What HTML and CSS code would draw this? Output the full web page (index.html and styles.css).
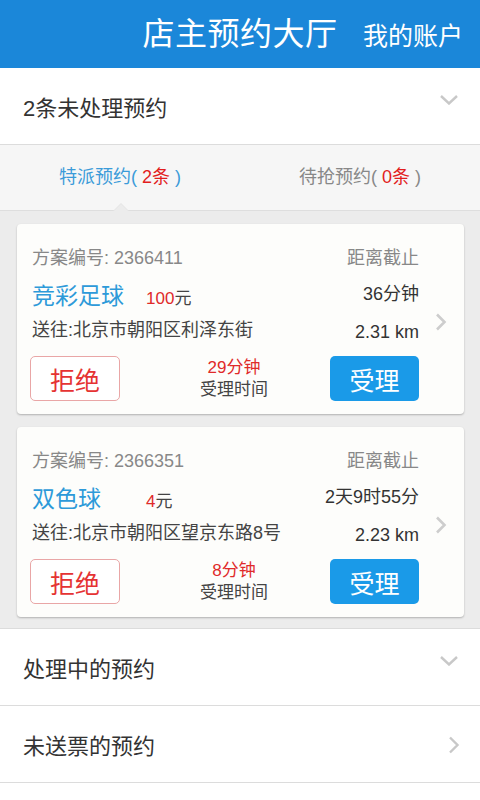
FILE: index.html
```html
<!DOCTYPE html>
<html lang="zh-CN">
<head>
<meta charset="utf-8">
<meta name="viewport" content="width=device-width, initial-scale=1">
<title>店主预约大厅</title>
<link rel="stylesheet" href="styles.css">
</head>
<body>
    <div class="topbar">
        <span></span>
        <h1>店主预约大厅</h1>
        <a class="account" href="#">我的账户</a>
    </div>

    <div class="section open">
        <span>2条未处理预约</span>
        <svg class="chev-down" width="18" height="10" viewBox="0 0 18 10"><path d="M1 1l8 7.5L17 1" fill="none" stroke="#c8c8c8" stroke-width="2.4"/></svg>
    </div>

    <div class="tabs">
        <div class="tab active">特派预约( <em>2条</em> )<i class="pointer"></i></div>
        <div class="tab">待抢预约( <em>0条</em> )</div>
    </div>

    <div class="list">
        <div class="card">
            <div class="card-body">
                <div class="info">
                    <div class="left">
                        <p class="code">方案编号: 2366411</p>
                        <p class="game"><span class="name">竞彩足球</span><span class="price"><b>100</b>元</span></p>
                        <p class="addr">送往:北京市朝阳区利泽东街</p>
                    </div>
                    <div class="right">
                        <p class="label">距离截止</p>
                        <p class="left-time">36分钟</p>
                        <p class="dist">2.31 km</p>
                    </div>
                </div>
                <div class="actions">
                    <button class="btn refuse">拒绝</button>
                    <div class="accept-time"><b>29分钟</b><span>受理时间</span></div>
                    <button class="btn accept">受理</button>
                </div>
            </div>
            <svg class="chev-right" width="12" height="18" viewBox="0 0 12 18"><path d="M2 1.5l7.5 7.5L2 16.5" fill="none" stroke="#cdcdcd" stroke-width="2.6"/></svg>
        </div>

        <div class="card">
            <div class="card-body">
                <div class="info">
                    <div class="left">
                        <p class="code">方案编号: 2366351</p>
                        <p class="game"><span class="name">双色球</span><span class="price"><b>4</b>元</span></p>
                        <p class="addr">送往:北京市朝阳区望京东路8号</p>
                    </div>
                    <div class="right">
                        <p class="label">距离截止</p>
                        <p class="left-time">2天9时55分</p>
                        <p class="dist">2.23 km</p>
                    </div>
                </div>
                <div class="actions">
                    <button class="btn refuse">拒绝</button>
                    <div class="accept-time"><b>8分钟</b><span>受理时间</span></div>
                    <button class="btn accept">受理</button>
                </div>
            </div>
            <svg class="chev-right" width="12" height="18" viewBox="0 0 12 18"><path d="M2 1.5l7.5 7.5L2 16.5" fill="none" stroke="#cdcdcd" stroke-width="2.6"/></svg>
        </div>
    </div>

    <div class="section">
        <span>处理中的预约</span>
        <svg class="chev-down" width="18" height="10" viewBox="0 0 18 10"><path d="M1 1l8 7.5L17 1" fill="none" stroke="#c8c8c8" stroke-width="2.4"/></svg>
    </div>
    <div class="section">
        <span>未送票的预约</span>
        <svg class="chev-right" width="12" height="18" viewBox="0 0 12 18"><path d="M2 1.5l7.5 7.5L2 16.5" fill="none" stroke="#c8c8c8" stroke-width="2.4"/></svg>
    </div>
</body>
</html>
```

FILE: styles.css
```css
body {
    font-family: "Liberation Sans", "Noto Sans CJK SC", sans-serif;
    margin: 0;
    padding: 0;
    background-color: #fff;
    color: #333;
}
p {
    margin: 0;
}
.topbar {
    height: 68px;
    background-color: #1b87d9;
    color: white;
    display: grid;
    grid-template-columns: 1fr auto 1fr;
    align-items: center;
}
.topbar h1 {
    margin: 0;
    font-size: 32px;
    font-weight: normal;
    letter-spacing: 0.5px;
    line-height: 68px;
}
.account {
    justify-self: end;
    padding-right: 17px;
    color: white;
    text-decoration: none;
    font-size: 25px;
}
.section {
    height: 76px;
    display: flex;
    align-items: center;
    justify-content: space-between;
    padding: 0 20px 0 23px;
    font-size: 22px;
    color: #333;
    background: white;
    border-bottom: 1px solid #dcdcdc;
}
.section .chev-down {
    margin-top: -12px;
    margin-right: 2px;
}
.section .chev-right {
    margin-top: 2px;
}
.tabs {
    height: 65px;
    display: grid;
    grid-template-columns: 1fr 1fr;
    background-color: #f6f6f6;
    border-bottom: 1px solid #dedede;
}
.tab {
    position: relative;
    text-align: center;
    line-height: 65px;
    font-size: 18px;
    color: #888;
}
.tab.active {
    color: #3b9bd9;
}
.tab em {
    font-style: normal;
    color: #e21d1d;
}
.pointer {
    position: absolute;
    left: 113px;
    bottom: -1px;
    width: 0;
    height: 0;
    border-left: 8px solid transparent;
    border-right: 8px solid transparent;
    border-bottom: 8px solid #e4e4e4;
}
.pointer::after {
    content: "";
    position: absolute;
    left: -7px;
    top: 1px;
    border-left: 7px solid transparent;
    border-right: 7px solid transparent;
    border-bottom: 7px solid #ececec;
}
.list {
    background-color: #ececec;
    padding: 13px 16px 11px 17px;
    display: flex;
    flex-direction: column;
    gap: 13px;
    border-bottom: 1px solid #dcdcdc;
}
.card {
    height: 190px;
    box-sizing: border-box;
    background-color: #fdfdfb;
    border-radius: 4px;
    box-shadow: 0 1px 2px rgba(0, 0, 0, 0.25);
    display: flex;
    align-items: flex-start;
}
.card-body {
    flex: 1;
    padding: 21px 0 0 13px;
}
.card .chev-right {
    margin: 89px 17px 0 16px;
}
.info {
    display: flex;
    justify-content: space-between;
    padding-left: 2px;
}
.code, .label {
    font-size: 18px;
    line-height: 26px;
    color: #888;
}
.game {
    margin-top: 5px;
    line-height: 40px;
    display: flex;
    align-items: baseline;
}
.name {
    width: 114px;
    font-size: 23px;
    color: #2d9ad9;
}
.price {
    font-size: 17px;
    color: #444;
}
.price b {
    font-weight: normal;
    color: #e02a2a;
}
.addr {
    font-size: 18px;
    line-height: 22px;
    color: #444;
}
.right {
    text-align: right;
}
.left-time {
    margin-top: 5px;
    font-size: 18px;
    line-height: 36px;
    color: #333;
}
.dist {
    font-size: 18px;
    line-height: 40px;
    color: #333;
}
.actions {
    margin-top: 4px;
    display: grid;
    grid-template-columns: 90px 1fr 89px;
    align-items: center;
}
.btn {
    height: 45px;
    border-radius: 5px;
    font-family: inherit;
    font-size: 25px;
    padding: 0;
    cursor: pointer;
}
.refuse {
    background: white;
    border: 1px solid #e9a6a6;
    color: #e53333;
}
.accept {
    background-color: #1a9ae8;
    border: none;
    color: white;
}
.accept-time {
    display: flex;
    flex-direction: column;
    align-items: center;
    padding-left: 18px;
    font-size: 17px;
    line-height: 22px;
}
.accept-time b {
    font-weight: normal;
    color: #e02a2a;
}
.accept-time span {
    color: #444;
}
```
